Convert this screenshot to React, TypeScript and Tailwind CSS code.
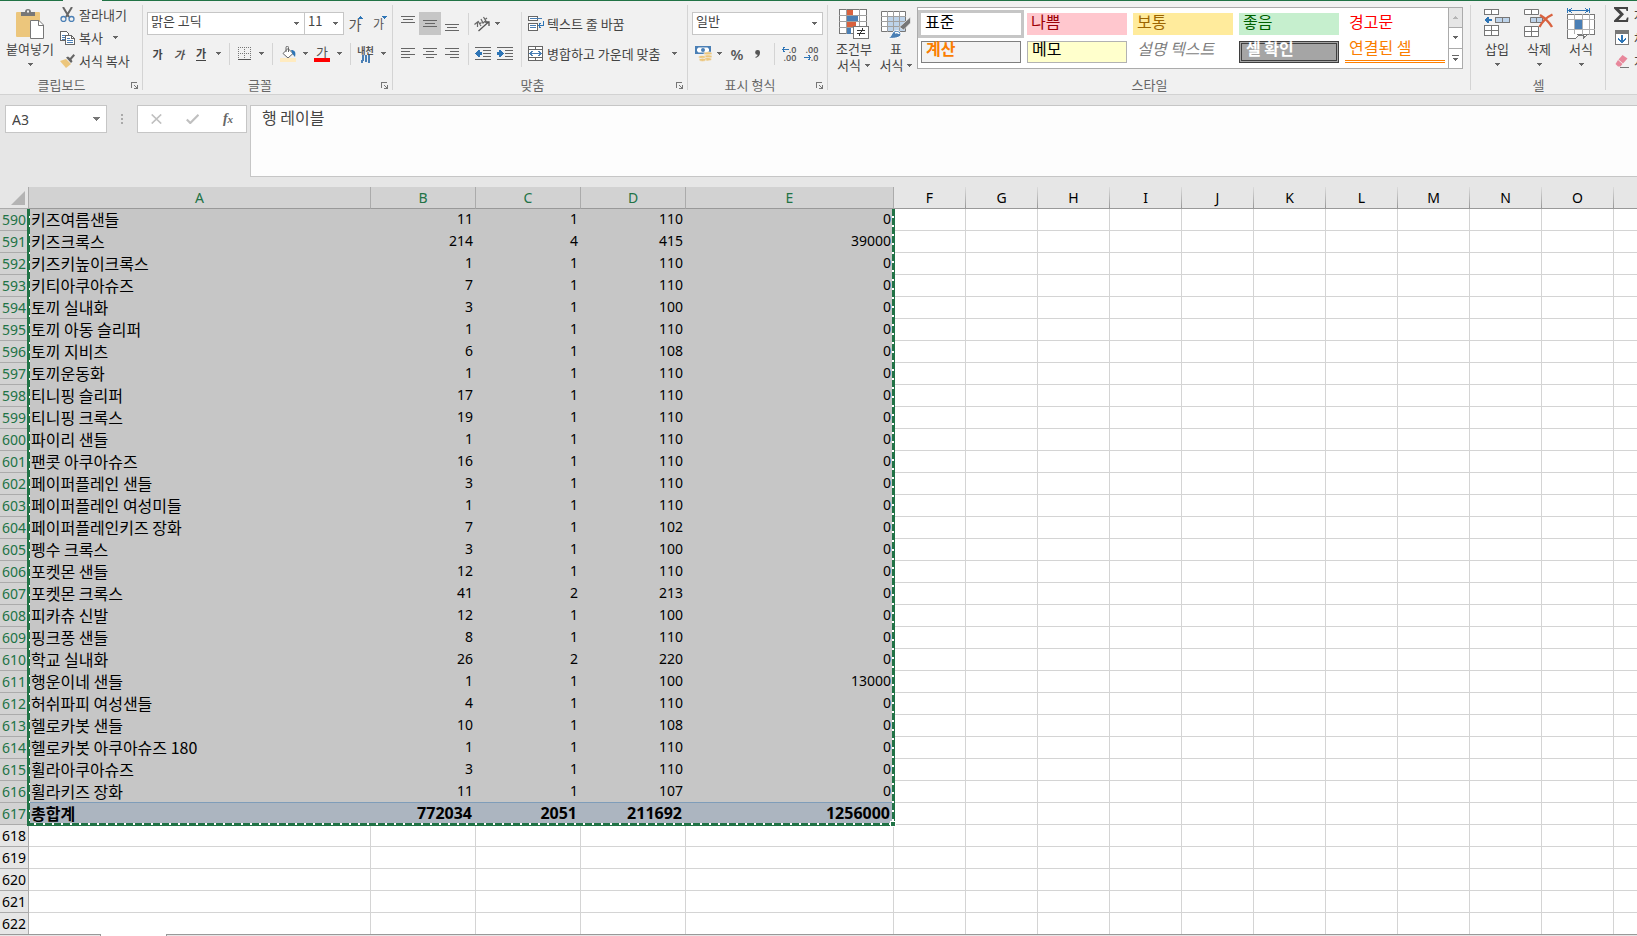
import React from "react";

type Row = [number, string, string, string, string, string];

const rows: Row[] = [
  [590, "키즈여름샌들", "11", "1", "110", "0"],
  [591, "키즈크록스", "214", "4", "415", "39000"],
  [592, "키즈키높이크록스", "1", "1", "110", "0"],
  [593, "키티아쿠아슈즈", "7", "1", "110", "0"],
  [594, "토끼 실내화", "3", "1", "100", "0"],
  [595, "토끼 아동 슬리퍼", "1", "1", "110", "0"],
  [596, "토끼 지비츠", "6", "1", "108", "0"],
  [597, "토끼운동화", "1", "1", "110", "0"],
  [598, "티니핑 슬리퍼", "17", "1", "110", "0"],
  [599, "티니핑 크록스", "19", "1", "110", "0"],
  [600, "파이리 샌들", "1", "1", "110", "0"],
  [601, "팬콧 아쿠아슈즈", "16", "1", "110", "0"],
  [602, "페이퍼플레인 샌들", "3", "1", "110", "0"],
  [603, "페이퍼플레인 여성미들", "1", "1", "110", "0"],
  [604, "페이퍼플레인키즈 장화", "7", "1", "102", "0"],
  [605, "펭수 크록스", "3", "1", "100", "0"],
  [606, "포켓몬 샌들", "12", "1", "110", "0"],
  [607, "포켓몬 크록스", "41", "2", "213", "0"],
  [608, "피카츄 신발", "12", "1", "100", "0"],
  [609, "핑크퐁 샌들", "8", "1", "110", "0"],
  [610, "학교 실내화", "26", "2", "220", "0"],
  [611, "행운이네 샌들", "1", "1", "100", "13000"],
  [612, "허쉬파피 여성샌들", "4", "1", "110", "0"],
  [613, "헬로카봇 샌들", "10", "1", "108", "0"],
  [614, "헬로카봇 아쿠아슈즈 180", "1", "1", "110", "0"],
  [615, "휠라아쿠아슈즈", "3", "1", "110", "0"],
  [616, "휠라키즈 장화", "11", "1", "107", "0"],
  [617, "총합계", "772034", "2051", "211692", "1256000"],
];
const emptyRows = [618, 619, 620, 621, 622];
const dataCols = ["A", "B", "C", "D", "E"];
const blankCols = ["F", "G", "H", "I", "J", "K", "L", "M", "N", "O", "P"];

function Icon({ w, h, children, crisp = true, className = "" }: { w: number; h: number; children: React.ReactNode; crisp?: boolean; className?: string }) {
  return (
    <svg width={w} height={h} viewBox={`0 0 ${w} ${h}`} fill="none" shapeRendering={crisp ? "crispEdges" : "auto"} className={`block shrink-0 ${className}`} aria-hidden="true">
      {children}
    </svg>
  );
}

function Arrow() {
  return (
    <Icon w={5} h={3}>
      <path d="M0 0h5v1H0zM1 1h3v1H1zM2 2h1v1H2z" fill="#666" />
    </Icon>
  );
}

function Tool({ label, className, children }: { label: string; className: string; children: React.ReactNode }) {
  return (
    <button type="button" aria-label={label} className={`flex h-[23px] shrink-0 items-center justify-center ${className}`}>
      {children}
    </button>
  );
}

function Sep() {
  return <div className="h-[22px] w-px shrink-0 bg-[#d4d4d4]" />;
}

function Group({ label, className, launcher = true, children }: { label: string; className: string; launcher?: boolean; children: React.ReactNode }) {
  return (
    <section aria-label={label} className={`relative flex h-full flex-col pt-1 ${className}`}>
      <div className="h-[72px]">{children}</div>
      <div className={`flex h-[17px] items-center ${launcher ? "-ml-1 pr-[5px]" : ""}`}>
        <span className={`flex-1 text-center text-[13px] leading-4 text-[#666] ${launcher ? "pr-1" : ""}`}>{label}</span>
        {launcher && (
          <button type="button" aria-label={`${label} 설정`} className="pt-[2px]">
            <Icon w={7} h={7}>
              <path d="M0 0h6v1H1v5H0z M3 3h1v1h1v1h1V3h1v4H3V6h2V5H4V4H3z" fill="#777" />
            </Icon>
          </button>
        )}
      </div>
      <div className="absolute right-0 top-[5px] h-[85px] w-px bg-[#d4d4d4]" />
    </section>
  );
}

function Combo({ label, value, className }: { label: string; value: string; className: string }) {
  return (
    <div className={`relative h-[23px] shrink-0 border border-[#c6c6c6] bg-white ${className}`}>
      <select aria-label={label} defaultValue={value} className="block h-full w-full appearance-none bg-transparent pb-1.5 pl-[3px] text-[13px] leading-4 text-[#444] outline-none">
        <option>{value}</option>
      </select>
      <div className="pointer-events-none absolute right-[5px] top-[9px]">
        <Arrow />
      </div>
    </div>
  );
}

function Lines({ items, w = 14 }: { items: [number, number][]; w?: number }) {
  return (
    <Icon w={w} h={12}>
      {items.map(([x, len], i) => (
        <rect key={i} x={x} y={i * 3} width={len} height={1} fill="#666" />
      ))}
    </Icon>
  );
}

function Clipboard() {
  return (
    <Group label="클립보드" className="w-[143px] shrink-0">
      <div className="flex">
        <button type="button" className="flex w-[60px] flex-col items-center pt-[5px] text-[13px] text-[#444]">
          <Icon w={28} h={30} crisp={false}>
            <rect x="0" y="3" width="24" height="25" rx="1" fill="#ecc67c" />
            <path d="M5 7V3h4a3 3 0 0 1 6 0h4v4z" fill="#777" />
            <rect x="11" y="1.5" width="2" height="2" fill="#f1f1f1" />
            <path d="M14.5 11.500h8.500l4.500 4.500v13.500h-13z" fill="#fff" stroke="#777" />
            <path d="M22.500 11.500v5h5" stroke="#777" />
          </Icon>
          <span className="mt-[2px] leading-4 whitespace-nowrap">붙여넣기</span>
          <span className="mt-[6px]"><Arrow /></span>
        </button>
        <div className="-mt-px flex flex-col text-[13px] leading-[23px] text-[#444]">
          <button type="button" className="flex h-[23px] items-center gap-[4px]">
            <Icon w={15} h={15} crisp={false}>
              <path d="M3 0l6 10M12 0L6 10" stroke="#666" strokeWidth="2" />
              <circle cx="3.500" cy="12" r="2.500" stroke="#4a7fb5" strokeWidth="1.300" />
              <circle cx="11.500" cy="12" r="2.500" stroke="#4a7fb5" strokeWidth="1.300" />
            </Icon>
            잘라내기
          </button>
          <button type="button" className="flex h-[23px] items-center gap-[4px]">
            <Icon w={15} h={14}>
              <path d="M.5 .5h6l2 2v7h-8z" fill="#fff" stroke="#666" />
              <path d="M2 4h4M2 6h4M2 8h3" stroke="#4a7fb5" />
              <path d="M5.500 4.500h6l3 3v6h-9z" fill="#fff" stroke="#666" />
              <path d="M7 7.500h3M7 9.500h6M7 11.500h6" stroke="#4a7fb5" />
              <path d="M11.500 4.500v3h3" stroke="#666" />
            </Icon>
            복사
            <span className="ml-[6px]"><Arrow /></span>
          </button>
          <button type="button" className="flex h-[23px] items-center gap-[4px] whitespace-nowrap">
            <Icon w={15} h={14} crisp={false}>
              <path d="M0 7l6-2 5 5-5 4z" fill="#ecc67c" />
              <path d="M6 3.500l2-1 2 1.500 3.500-4 1.500 1.500-3.500 4 1 2-1.500 1.500z" fill="#666" />
            </Icon>
            서식 복사
          </button>
        </div>
      </div>
    </Group>
  );
}

function FontGroup() {
  return (
    <Group label="글꼴" className="w-[250px] shrink-0 pl-1">
      <div className="flex pt-2">
        <Combo label="글꼴" value="맑은 고딕" className="w-[158px]" />
        <Combo label="글꼴 크기" value="11" className="-ml-px w-10" />
        <Tool label="글꼴 크기 크게" className="w-6">
          <span className="text-[14px] leading-4 text-[#555]">가</span>
          <Icon w={5} h={3} className="mb-3 -ml-[3px]"><path d="M2 0h1v1H2zM1 1h3v1H1zM0 2h5v1H0z" fill="#2e75b6" /></Icon>
        </Tool>
        <Tool label="글꼴 크기 작게" className="w-6">
          <span className="text-[12px] leading-4 text-[#555]">가</span>
          <Icon w={5} h={3} className="mb-3 -ml-[2px]"><path d="M0 0h5v1H0zM1 1h3v1H1zM2 2h1v1H2z" fill="#2e75b6" /></Icon>
        </Tool>
      </div>
      <div className="mt-[7px] flex items-center">
        <Tool label="굵게" className="w-[21px]"><span className="text-[11px] leading-4 font-bold text-[#444]">가</span></Tool>
        <Tool label="기울임꼴" className="w-[22px]"><span className="text-[11px] leading-4 font-bold italic text-[#555]">가</span></Tool>
        <Tool label="밑줄" className="w-[22px]"><span className="border-b border-[#444] text-[11px] leading-[13px] font-bold text-[#444]">가</span></Tool>
        <Tool label="밑줄 옵션" className="w-[12px]"><Arrow /></Tool>
        <div className="w-[5px]" />
        <Sep />
        <Tool label="테두리" className="w-[29px]">
          <Icon w={13} h={13}>
            <path d="M.5 0v12M6.500 0v12M12.500 0v12M0 .5h13M0 6.500h13" stroke="#777" strokeDasharray="1 1" />
            <path d="M0 12.500h13" stroke="#555" />
          </Icon>
        </Tool>
        <Tool label="테두리 옵션" className="w-[5px]"><Arrow /></Tool>
        <div className="w-2" />
        <Sep />
        <Tool label="채우기 색" className="w-[29px]">
          <Icon w={16} h={16} crisp={false}>
            <path d="M8 2.500l5 5-5 4.500-5-4.500z" fill="#fff" stroke="#666" />
            <path d="M6 6V1.500a1.200 1.200 0 0 1 2.500 0V6" stroke="#666" />
            <path d="M11 4c4 0 5 2 4 7l-2.500-3z" fill="#2e75b6" />
            <rect x="0" y="12" width="16" height="4" fill="#ffebc0" />
          </Icon>
        </Tool>
        <Tool label="채우기 색 옵션" className="w-[6px]"><Arrow /></Tool>
        <Tool label="글꼴 색" className="w-[28px]">
          <span className="flex flex-col items-center">
            <span className="text-[13px] leading-3 text-[#555]">가</span>
            <span className="h-1 w-4 bg-[#f00]" />
          </span>
        </Tool>
        <Tool label="글꼴 색 옵션" className="w-[6px]"><Arrow /></Tool>
        <div className="w-2" />
        <Sep />
        <Tool label="윗주" className="w-[29px]">
          <span className="flex flex-col items-center pt-px">
            <span className="text-[9px] leading-[9px] font-bold text-[#555]">내천</span>
            <Icon w={9} h={8}><path d="M2 0v5L0 8M5 0v7M8 0v8" stroke="#4a7fb5" strokeWidth="2" /></Icon>
          </span>
        </Tool>
        <Tool label="윗주 옵션" className="w-[6px]"><Arrow /></Tool>
      </div>
    </Group>
  );
}

function Alignment() {
  return (
    <Group label="맞춤" className="w-[295px] shrink-0 pl-1">
      <div className="flex pt-2">
        <div className="flex w-[71px] flex-col gap-[7px]">
          <div className="flex">
            <Tool label="위쪽 맞춤" className="w-[22px] pb-1"><Lines items={[[0, 14], [2, 10], [0, 14]]} /></Tool>
            <Tool label="가운데 맞춤" className="w-[22px] bg-[#c6c6c6] pt-1"><Lines items={[[0, 14], [2, 10], [0, 14]]} /></Tool>
            <Tool label="아래쪽 맞춤" className="w-[22px] pt-3"><Lines items={[[0, 14], [2, 10], [0, 14]]} /></Tool>
          </div>
          <div className="flex">
            <Tool label="왼쪽 맞춤" className="w-[22px]"><Lines items={[[0, 14], [0, 9], [0, 14], [0, 9]]} /></Tool>
            <Tool label="가로 가운데 맞춤" className="w-[22px]"><Lines items={[[0, 14], [3, 8], [0, 14], [3, 8]]} /></Tool>
            <Tool label="오른쪽 맞춤" className="w-[22px]"><Lines items={[[0, 14], [5, 9], [0, 14], [5, 9]]} /></Tool>
          </div>
        </div>
        <div className="flex w-[53px] flex-col gap-[7px]">
          <div className="flex items-center">
            <Sep />
            <Tool label="방향" className="w-[26px]">
              <Icon w={16} h={16} crisp={false}>
                <path d="M4.500 15L14.500 6M11 6h4v4" stroke="#555" strokeWidth="1.300" />
                <path d="M.5 8.500l3-2.500v5M4 5l3 5M5.500 8l2-1.500M7 3l2 4 2.500-2M9.500 1l3 5M11 3.500l2-1.500" stroke="#666" strokeWidth="1.200" />
              </Icon>
            </Tool>
            <Tool label="방향 옵션" className="w-[5px]"><Arrow /></Tool>
          </div>
          <div className="flex items-center">
            <Sep />
            <Tool label="내어쓰기" className="w-[28px]">
              <Icon w={16} h={13}>
                <path d="M0 .5h16M8 3.500h8M8 6.500h8M8 9.500h8M0 12.500h16" stroke="#666" />
                <path d="M0 6h1V5h1V4h1V3h2v2h2v3H5v2H3V9H2V8H1V7H0z" fill="#2e75b6" />
              </Icon>
            </Tool>
            <Tool label="들여쓰기" className="w-[16px]">
              <Icon w={16} h={13}>
                <path d="M0 .5h16M8 3.500h8M8 6.500h8M8 9.500h8M0 12.500h16" stroke="#666" />
                <path d="M7 6H6V5H5V4H4V3H2v2H0v3h2v2h2V9h1V8h1V7h1z" fill="#2e75b6" />
              </Icon>
            </Tool>
          </div>
        </div>
        <div className="flex flex-1 gap-[6px] text-[13px] leading-[23px] whitespace-nowrap text-[#444]">
          <div className="h-[55px] w-px bg-[#d9d9d9]" />
          <div className="flex flex-1 flex-col gap-[7px]">
            <button type="button" className="flex h-[23px] items-center gap-[3px]">
              <Icon w={16} h={15}>
                <path d="M.5 .5h9v4h-9zM.5 7.500h9v7h-9z" fill="#fff" stroke="#666" />
                <path d="M2 2.500h12M2 9.500h6M2 11.500h6" stroke="#4a7fb5" />
                <path d="M15.500 5v4.500h-5M12.500 7l-2 2.500 2 2.500" stroke="#2e75b6" />
              </Icon>
              텍스트 줄 바꿈
            </button>
            <button type="button" className="flex h-[23px] items-center gap-[3px]">
              <Icon w={16} h={15}>
                <path d="M.5 .5h14v14H.5zM0 3.500h15M0 11.500h15M7.500 0v4M7.500 11v4" fill="#fff" stroke="#666" />
                <path d="M2 7.500h11M4.500 5L2 7.500 4.500 10M10.500 5L13 7.500 10.500 10" stroke="#4a7fb5" />
              </Icon>
              병합하고 가운데 맞춤
              <span className="ml-[9px]"><Arrow /></span>
            </button>
          </div>
        </div>
      </div>
    </Group>
  );
}

function NumberGroup() {
  return (
    <Group label="표시 형식" className="w-[140px] shrink-0 pl-1">
      <div className="pt-2">
        <Combo label="표시 형식" value="일반" className="w-[131px]" />
        <div className="mt-[7px] flex items-center">
          <Tool label="회계 표시 형식" className="w-[22px]">
            <Icon w={17} h={16} crisp={false}>
              <rect x="0" y="0" width="16" height="8" fill="#4a7fb5" />
              <path d="M2 3l1.500-1.500h9L14 3v2l-1.500 1.500h-9L2 5z" fill="#fff" />
              <circle cx="8" cy="4" r="2" fill="#4a7fb5" />
              <ellipse cx="13" cy="7.500" rx="4" ry="1.700" fill="#ecc67c" stroke="#f1f1f1" strokeWidth=".6" />
              <ellipse cx="13" cy="10.500" rx="4" ry="1.700" fill="#ecc67c" stroke="#f1f1f1" strokeWidth=".6" />
              <ellipse cx="12.500" cy="13.200" rx="4" ry="1.700" fill="#ecc67c" stroke="#f1f1f1" strokeWidth=".6" />
              <ellipse cx="7" cy="11" rx="3.500" ry="1.600" fill="#ecc67c" stroke="#f1f1f1" strokeWidth=".6" />
              <ellipse cx="7.500" cy="13.800" rx="3.500" ry="1.600" fill="#ecc67c" stroke="#f1f1f1" strokeWidth=".6" />
            </Icon>
          </Tool>
          <Tool label="회계 옵션" className="w-[10px]"><Arrow /></Tool>
          <Tool label="백분율" className="w-[26px]"><span className="font-['Open_Sans'] text-[15px] leading-5 font-semibold text-[#555]">%</span></Tool>
          <Tool label="쉼표" className="w-[16px]">
            <Icon w={6} h={8} crisp={false}><path d="M2.500 0a2.400 2.400 0 0 1 2.500 2.600C5 5.500 3.500 7 .8 8L.4 7C2 6.300 2.600 5.600 2.600 4.800A2.400 2.400 0 0 1 2.500 0z" fill="#555" /></Icon>
          </Tool>
          <div className="w-2" />
          <Sep />
          <Tool label="자릿수 늘림" className="w-[28px]">
            <span className="flex flex-col items-end font-['Open_Sans'] text-[9px] leading-[8px] font-semibold text-[#555]">
              <span className="flex items-center"><Icon w={7} h={5}><path d="M0 2.500h7M2.500 0L.5 2.500 2.500 5" stroke="#2e75b6" /></Icon>.0</span>
              <span>.00</span>
            </span>
          </Tool>
          <Tool label="자릿수 줄임" className="w-[16px]">
            <span className="flex flex-col items-end font-['Open_Sans'] text-[9px] leading-[8px] font-semibold text-[#555]">
              <span>.00</span>
              <span className="flex items-center"><Icon w={7} h={5}><path d="M0 2.500h7M4.500 0l2 2.500-2 2.500" stroke="#2e75b6" /></Icon>.0</span>
            </span>
          </Tool>
        </div>
      </div>
    </Group>
  );
}

const styleRows: { name: string; css: string }[][] = [
  [
    { name: "표준", css: "bg-white text-black outline-3 outline-[#c6c6c6]" },
    { name: "나쁨", css: "bg-[#ffc7ce] text-[#9c0006]" },
    { name: "보통", css: "bg-[#ffeb9c] text-[#9c6500]" },
    { name: "좋음", css: "bg-[#c6efce] text-[#006100]" },
    { name: "경고문", css: "text-[#f00]" },
  ],
  [
    { name: "계산", css: "border border-[#7f7f7f] bg-[#f2f2f2] font-bold text-[#fa7d00]" },
    { name: "메모", css: "border border-[#b2b2b2] bg-[#ffffcc] text-black" },
    { name: "설명 텍스트", css: "italic text-[#7f7f7f]" },
    { name: "셀 확인", css: "border-3 border-double border-[#3f3f3f] bg-[#a5a5a5] font-bold text-white" },
    { name: "연결된 셀", css: "border-b-3 border-double border-[#ff8001] text-[#fa7d00]" },
  ],
];

function Styles() {
  return (
    <Group label="스타일" launcher={false} className="min-w-0 flex-1">
      <div className="flex text-[13px] leading-4 text-[#444]">
        <button type="button" className="flex w-[52px] flex-col items-center pt-[5px]">
          <Icon w={30} h={30}>
            <path d="M.5 .5h27v24H.5z" fill="#fff" stroke="#777" />
            <path d="M0 6.500h28M0 12.500h28M0 18.500h28M7.500 0v25M20.500 0v25" stroke="#a0a0a0" />
            <path d="M8 1h6v5H8zM8 13h9v5H8z" fill="#d9623f" />
            <path d="M8 7h11v5H8zM8 19h4v6H8z" fill="#4a7fb5" />
            <path d="M14.500 17.500h15v12h-15z" fill="#fff" stroke="#777" />
            <path d="M18 21.500h8M18 24.500h8M24 19l-4 8" stroke="#333" />
          </Icon>
          <span className="mt-[2px] whitespace-nowrap">조건부</span>
          <span className="-ml-px flex items-center gap-1 whitespace-nowrap">서식<Arrow /></span>
        </button>
        <button type="button" className="flex w-[32px] flex-col items-center pt-[5px]">
          <Icon w={30} h={30} crisp={false}>
            <path d="M.5 2.500h24v20H.5z" fill="#fff" stroke="#777" />
            <path d="M7 7h17v15H7z" fill="#bdd3ea" />
            <path d="M0 7.500h25M0 12.500h25M0 17.500h25M6.500 2v21M12.500 2v21M18.500 2v21" stroke="#a0a0a0" />
            <path d="M29.500 8v6l-7 7-4-3z" fill="#777" stroke="#f1f1f1" strokeWidth=".7" />
            <path d="M7 29c3-1 3-3 5-6 3-3 8-1 8 2 0 4-8 5-13 4z" fill="#4a7fb5" stroke="#fff" />
            <path d="M14 24c2-1 4 0 4 1" stroke="#fff" strokeWidth="1.500" />
          </Icon>
          <span className="mt-[2px]">표</span>
          <span className="flex items-center gap-1 whitespace-nowrap">서식<Arrow /></span>
        </button>
        <div className="mt-[3px] ml-[5px] flex h-[62px] border border-[#ababab] bg-white">
          <div className="flex flex-col gap-[6px] px-[3px] pt-[5px]">
            {styleRows.map((line, i) => (
              <div key={i} className="flex gap-[6px]">
                {line.map((s) => (
                  <button key={s.name} type="button" className={`flex h-[22px] w-[100px] items-center text-left text-[16px] leading-4 whitespace-nowrap ${s.css}`}>
                    <span className={i === 0 ? "pb-1.5 pl-[4px]" : "pb-2 pl-[4px]"}>{s.name}</span>
                  </button>
                ))}
              </div>
            ))}
          </div>
          <div className="flex w-[14px] flex-col divide-y divide-[#ababab] border-l border-[#ababab]">
            <button type="button" aria-label="위로" className="flex flex-1 items-center justify-center bg-[#e6e6e6]">
              <Icon w={5} h={3}><path d="M2 0h1v1H2zM1 1h3v1H1zM0 2h5v1H0z" fill="#b5b5b5" /></Icon>
            </button>
            <button type="button" aria-label="아래로" className="flex flex-1 items-center justify-center"><Arrow /></button>
            <button type="button" aria-label="자세히" className="flex flex-1 items-center justify-center">
              <Icon w={7} h={7}><path d="M0 0h7v1H0zM1 3h5v1H1zM2 4h3v1H2zM3 5h1v1H3z" fill="#666" /></Icon>
            </button>
          </div>
        </div>
      </div>
    </Group>
  );
}

function Cells() {
  const item = "flex w-[42px] flex-col items-center pt-[4px]";
  return (
    <Group label="셀" launcher={false} className="w-[135px] shrink-0">
      <div className="flex pl-[5px] text-[13px] leading-4 text-[#444]">
        <button type="button" className={item}>
          <Icon w={26} h={31}>
            <path d="M.5 1.500h14v5H.5zM7.500 1v6M.5 17.500h14v10H.5zM7.500 17v11M0 22.500h15" fill="#fff" stroke="#777" />
            <path d="M11.500 9.500h14v5h-14z" fill="#bdd3ea" stroke="#777" />
            <path d="M18.500 9v6" stroke="#777" />
            <path d="M1 11h1v-1h1V9h2v2h3v2H5v2H3v-1H2v-1H1z" fill="#2e75b6" />
          </Icon>
          <span className="mt-[2px]">삽입</span>
          <span className="mt-[6px]"><Arrow /></span>
        </button>
        <button type="button" className={item}>
          <Icon w={30} h={31} crisp={false}>
            <path d="M.5 1.500h14v5H.5zM7.500 1v6M.5 18.500h14v10H.5zM7.500 18v11M0 23.500h15" fill="#fff" stroke="#777" />
            <path d="M6.500 9.500h12v5h-12z" fill="#bdd3ea" stroke="#777" />
            <path d="M12.500 9v6" stroke="#777" />
            <path d="M16 7c5 3 9 7 12 12M28.500 6.500C23 9 18 14 15.500 19" stroke="#d9623f" strokeWidth="2.400" />
          </Icon>
          <span className="mt-[2px]">삭제</span>
          <span className="mt-[6px]"><Arrow /></span>
        </button>
        <button type="button" className={item}>
          <Icon w={28} h={31}>
            <path d="M.5 0v5M22.500 0v5M2 2.500h19M5 0L2 2.500 5 5M18 0l3 2.500L18 5" stroke="#2e75b6" />
            <path d="M.5 6.500h27v20H.5z" fill="#fff" stroke="#777" />
            <path d="M0 11.500h28M0 21.500h28M7.500 6v21M15.500 6v21M22.500 6v21" stroke="#b0b0b0" />
            <path d="M8 12h7v9H8z" fill="#4a7fb5" />
            <path d="M.5 26v4.500h8L12 27h4v3.500l4-3.500" fill="#fff" stroke="#777" />
          </Icon>
          <span className="mt-[2px]">서식</span>
          <span className="mt-[6px]"><Arrow /></span>
        </button>
      </div>
    </Group>
  );
}

function Editing() {
  return (
    <section aria-label="편집" className="w-[31px] shrink-0 overflow-hidden pt-[3px] pl-2 text-[13px] leading-[23px] whitespace-nowrap text-[#444]">
      <button type="button" className="flex h-[23px] items-center gap-[5px]">
        <Icon w={15} h={15} crisp={false}><path d="M0 0h14v4h-1.500L12 2H5l5 5.200L4.500 13H12l1-2.500h1.500L14 15H0v-1.500l6-6-6-6z" fill="#444" /></Icon>
        자동 합계
      </button>
      <button type="button" className="flex h-[23px] items-center gap-[5px]">
        <Icon w={15} h={15}>
          <path d="M1.500 .5h13v14h-13z" fill="#fff" stroke="#777" />
          <path d="M1 0h14v4H1z" fill="#777" />
          <path d="M7 5h2v5h1V9h1V8h1v2h-1v1h-1v1H9v1H7v-1H6v-1H5v-1H4V8h1v1h1v1h1z" fill="#2e75b6" />
        </Icon>
        채우기
      </button>
      <button type="button" className="flex h-[23px] items-center gap-[5px]">
        <Icon w={15} h={14} crisp={false}>
          <path d="M8.500 1l5 3.500L9 9.500 4.500 5.500z" fill="#e8879b" />
          <path d="M4 6l4.500 4L6.500 12.500 4 12.500 1.500 10z" fill="#e8879b" />
          <path d="M6 13.500h9" stroke="#777" />
        </Icon>
        지우기
      </button>
    </section>
  );
}

function FormulaBar() {
  return (
    <div className="flex h-[92px] items-start bg-[#e6e6e6] pt-[10px] pl-[5px]">
      <div className="relative h-7 w-[102px] border border-[#c6c6c6] bg-white">
        <input aria-label="이름 상자" defaultValue="A3" className="h-full w-full bg-transparent pl-[6px] font-['Noto_Sans'] text-[14px] text-[#444] outline-none" />
        <div className="pointer-events-none absolute top-[11px] right-[6px]">
          <Icon w={7} h={4}><path d="M0 0h7v1H0zM1 1h5v1H1zM2 2h3v1H2zM3 3h1v1H3z" fill="#777" /></Icon>
        </div>
      </div>
      <div className="flex h-7 w-[30px] flex-col items-center justify-center gap-[2px]">
        <span className="h-[2px] w-[2px] bg-[#aaa]" />
        <span className="h-[2px] w-[2px] bg-[#aaa]" />
        <span className="h-[2px] w-[2px] bg-[#aaa]" />
      </div>
      <div className="flex h-7 w-[110px] items-center border border-[#c6c6c6] bg-white">
        <button type="button" aria-label="취소" className="flex w-9 justify-center">
          <Icon w={11} h={10} crisp={false}><path d="M.7 .5l9.500 9M10.200 .5L.7 9.500" stroke="#c0c0c0" strokeWidth="1.700" /></Icon>
        </button>
        <button type="button" aria-label="입력" className="flex w-9 justify-center">
          <Icon w={13} h={10} crisp={false}><path d="M.8 5.500l3.500 3.500L12.500 .8" stroke="#c0c0c0" strokeWidth="2.200" /></Icon>
        </button>
        <button type="button" aria-label="함수 삽입" className="flex w-9 items-baseline justify-center pb-px font-['Liberation_Serif'] leading-4 font-bold text-[#666] italic">
          <span className="text-[14px]">f</span><span className="text-[11px]">x</span>
        </button>
      </div>
      <textarea aria-label="수식 입력줄" defaultValue="행 레이블" className="ml-[3px] block h-[72px] min-w-0 flex-1 resize-none border border-r-0 border-[#c6c6c6] bg-[#fdfdfd] py-[2px] pl-[11px] text-[16px] leading-[18px] text-[#444] outline-none" />
    </div>
  );
}

const dashesV = "bg-[repeating-linear-gradient(to_bottom,#217346_0_7px,#fff_7px_9px)]";
const dashesH = "bg-[repeating-linear-gradient(to_right,#217346_0_7px,#fff_7px_9px)]";

function Sheet() {
  return (
    <div className="relative overflow-hidden bg-white">
      <table className="w-[1686px] table-fixed border-separate border-spacing-0 text-[16px] leading-[18px] text-black">
        <colgroup>
          <col className="w-[29px]" />
          <col className="w-[342px]" />
          <col className="w-[105px]" />
          <col className="w-[105px]" />
          <col className="w-[105px]" />
          <col className="w-[208px]" />
          {blankCols.map((c) => <col key={c} className="w-[72px]" />)}
        </colgroup>
        <thead>
          <tr className="h-[22px] font-['Noto_Sans'] text-[14px]">
            <th aria-label="모두 선택" className="border-r border-b border-[#ababab] bg-[#e6e6e6] p-0">
              <Icon w={14} h={14} crisp={false} className="ml-[11px]"><path d="M14 0v14H0z" fill="#b4b4b4" /></Icon>
            </th>
            {dataCols.map((c) => (
              <th key={c} scope="col" className="border-r border-b border-r-[#ababab] border-b-[#999] bg-[#d2d2d2] p-0 font-normal text-[#217346]">{c}</th>
            ))}
            {blankCols.map((c) => (
              <th key={c} scope="col" className="border-b border-[#999] bg-[#e6e6e6] bg-[linear-gradient(to_bottom,#dcdcdc,#999)] bg-[length:1px_100%] bg-right bg-no-repeat p-0 pr-px font-normal">{c}</th>
            ))}
          </tr>
        </thead>
        <tbody>
          {rows.map(([n, name, ...vals]) => {
            const total = n === 617;
            const fill = total ? "bg-[#acb5c0] font-bold" : n === 616 ? "border-b border-[#7f9db9] bg-[#c6c6c6]" : "bg-[#c6c6c6]";
            return (
              <tr key={n} className="h-[22px]">
                <th scope="row" className="border-r border-b border-[#ababab] bg-[#d2d2d2] p-0 text-center font-['Noto_Sans'] text-[14px] font-normal text-[#217346]">{n}</th>
                <td className={`p-0 pb-[2px] pl-[2px] whitespace-nowrap ${fill}`}>{name}</td>
                {vals.map((v, i) => (
                  <td key={i} className={`p-0 pb-[2px] text-right font-['Noto_Sans'] ${total ? "pr-[4px] text-[16px]" : "pr-[3px] text-[14px]"} ${fill}`}>{v}</td>
                ))}
                {blankCols.map((c) => <td key={c} className="border-r border-b border-[#d4d4d4] p-0" />)}
              </tr>
            );
          })}
          {emptyRows.map((n) => (
            <tr key={n} className="h-[22px]">
              <th scope="row" className="border-r border-b border-[#ababab] bg-[#e6e6e6] p-0 text-center font-['Noto_Sans'] text-[14px] font-normal">{n}</th>
              {[...dataCols, ...blankCols].map((c) => (
                <td key={c} className={`border-r border-b p-0 ${n === 622 ? "border-r-[#d4d4d4] border-b-[#999]" : "border-[#d4d4d4]"}`} />
              ))}
            </tr>
          ))}
        </tbody>
      </table>
      <div className="pointer-events-none absolute top-[22px] left-[27px] h-[617px] w-[868px]">
        <div className="absolute top-0 left-0 h-full w-[2px] bg-[#217346]" />
        <div className={`absolute top-0 left-[2px] h-full w-px ${dashesV}`} />
        <div className="absolute top-0 right-0 h-full w-[3px] bg-[#217346]" />
        <div className={`absolute top-0 right-[1px] h-full w-[2px] ${dashesV}`} />
        <div className="absolute bottom-0 left-0 h-[3px] w-full bg-[#217346]" />
        <div className={`absolute bottom-[1px] left-0 h-[2px] w-full ${dashesH}`} />
        <div className="absolute -right-[1px] -bottom-[1px] h-[6px] w-[6px] border border-white bg-[#217346]" />
      </div>
    </div>
  );
}

export default function App() {
  return (
    <main className="min-h-screen overflow-hidden bg-[#e6e6e6] font-['Noto_Sans_CJK_KR','Noto_Sans',sans-serif]">
      <header className="flex h-[95px] border-b border-[#d2d2d2] bg-[#f1f1f1] bg-[linear-gradient(to_right,#217346_0_63px,#f1f1f1_63px_102px,#217346_102px)] bg-[length:100%_1px] bg-no-repeat">
        <Clipboard />
        <FontGroup />
        <Alignment />
        <NumberGroup />
        <Styles />
        <Cells />
        <Editing />
      </header>
      <FormulaBar />
      <Sheet />
      <nav aria-label="시트" className="relative -mt-px flex h-[2px]">
        <div className="w-[101px] border-t border-r border-[#999] bg-[#e6e6e6]" />
        <div className="w-[65px] bg-white" />
        <div className="flex-1 border-t border-l border-[#999] bg-[#e6e6e6]" />
      </nav>
    </main>
  );
}
